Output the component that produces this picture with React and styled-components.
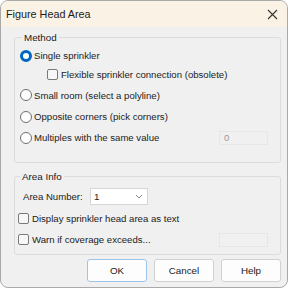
import React from 'react';
import styled, { createGlobalStyle } from 'styled-components';

const GlobalStyle = createGlobalStyle`
  html, body {
    margin: 0;
    padding: 0;
    background: #ffffff;
  }
  body {
    font-family: "Liberation Sans", Arial, sans-serif;
    color: #1b1b1b;
  }
`;

const StyledWindow = styled.div`
  box-sizing: border-box;
  width: 288px;
  height: 288px;
  border: 1px solid #a9a9a9;
  border-radius: 8px;
  overflow: hidden;
  background: #f0f0f0;
  display: flex;
  flex-direction: column;
`;

const StyledTitleBar = styled.div`
  height: 26px;
  flex: none;
  background: #faf2e5;
  display: flex;
  align-items: center;
  justify-content: space-between;
  padding: 0 9px 0 5px;
`;

const StyledTitle = styled.span`
  font-size: 10.8px;
`;

const StyledBody = styled.div`
  flex: 1;
  display: flex;
  flex-direction: column;
  padding: 5px 6px 0 13px;
`;

const StyledGroup = styled.fieldset`
  margin: 0;
  margin-top: ${(p) => p.top || 0}px;
  padding: ${(p) => p.padding};
  border: 1px solid #dcdcdc;
  border-radius: 3px;
  height: ${(p) => p.height}px;
  box-sizing: border-box;
  display: flex;
  flex-direction: column;
`;

const StyledLegend = styled.legend`
  font-size: 9.8px;
  padding: 0 2px;
  margin-left: 2px;
`;

const StyledOption = styled.label`
  display: flex;
  align-items: center;
  height: ${(p) => p.height || 21}px;
  flex: none;
  font-size: 9.6px;
  padding-left: ${(p) => p.indent || 0}px;
`;

const StyledRadio = styled.span`
  box-sizing: border-box;
  width: 12px;
  height: 12px;
  border-radius: 50%;
  flex: none;
  margin-right: 2px;
  border: ${(p) => (p.checked ? '3.5px solid #0067c0' : '1px solid #6e6e6e')};
  background: #ffffff;
`;

const StyledCheck = styled.span`
  box-sizing: border-box;
  width: 11px;
  height: 11px;
  border-radius: 2px;
  flex: none;
  margin-right: 3px;
  border: 1px solid #7a7a7a;
  background: #f7f7f7;
`;

const StyledSpacer = styled.span`
  flex: 1;
`;

const StyledField = styled.span`
  box-sizing: border-box;
  width: 49px;
  height: 14px;
  border: 1px solid #e6e6e6;
  color: #9a9a9a;
  font-size: 9.6px;
  padding-left: 4px;
  line-height: 12px;
`;

const StyledFieldRow = styled.div`
  display: flex;
  align-items: center;
  height: 24px;
  flex: none;
  font-size: 9.6px;
  padding-left: 5px;
`;

const StyledFieldLabel = styled.span`
  width: 67px;
`;

const StyledSelect = styled.div`
  box-sizing: border-box;
  width: 58px;
  height: 17px;
  background: #ffffff;
  border: 1px solid #d6d6d6;
  display: flex;
  align-items: center;
  justify-content: space-between;
  padding: 0 4px 0 3px;
  font-size: 9.8px;
`;

const StyledButtons = styled.div`
  display: flex;
  justify-content: flex-end;
  gap: 7px;
  padding: 4px 0 0;
`;

const StyledButton = styled.button`
  box-sizing: border-box;
  width: 60px;
  height: 23px;
  background: #fdfdfd;
  border: 1px solid ${(p) => (p.primary ? '#9cc3ea' : '#d0d0d0')};
  border-radius: 3px;
  font-family: inherit;
  font-size: 9.8px;
  color: #1b1b1b;
  padding: 0;
`;

const Chevron = () => (
  <svg width="8" height="5" viewBox="0 0 8 5">
    <path d="M1 1 L4 4 L7 1" fill="none" stroke="#8a8a8a" strokeWidth="1" />
  </svg>
);

const CloseIcon = () => (
  <svg width="11" height="11" viewBox="0 0 11 11">
    <path d="M1 1 L10 10 M10 1 L1 10" stroke="#333333" strokeWidth="1.1" />
  </svg>
);

const methods = [
  { label: 'Small room (select a polyline)', height: 22 },
  { label: 'Opposite corners (pick corners)' },
  { label: 'Multiples with the same value', value: '0' },
];

const App = () => (
  <>
    <GlobalStyle />
    <StyledWindow>
      <StyledTitleBar>
        <StyledTitle>Figure Head Area</StyledTitle>
        <CloseIcon />
      </StyledTitleBar>
      <StyledBody>
        <StyledGroup height={131} padding="3px 12px 0 5px">
          <StyledLegend>Method</StyledLegend>
          <StyledOption height={19}>
            <StyledRadio checked />
            Single sprinkler
          </StyledOption>
          <StyledOption height={19} indent={27}>
            <StyledCheck />
            Flexible sprinkler connection (obsolete)
          </StyledOption>
          {methods.map((m) => (
            <StyledOption key={m.label} height={m.height}>
              <StyledRadio />
              {m.label}
              {m.value && (
                <>
                  <StyledSpacer />
                  <StyledField>{m.value}</StyledField>
                </>
              )}
            </StyledOption>
          ))}
        </StyledGroup>
        <StyledGroup top={8} height={84} padding="2px 12px 0 3px">
          <StyledLegend>Area Info</StyledLegend>
          <StyledFieldRow>
            <StyledFieldLabel>Area Number:</StyledFieldLabel>
            <StyledSelect>
              1
              <Chevron />
            </StyledSelect>
          </StyledFieldRow>
          <StyledOption height={20}>
            <StyledCheck />
            Display sprinkler head area as text
          </StyledOption>
          <StyledOption height={23}>
            <StyledCheck />
            Warn if coverage exceeds...
            <StyledSpacer />
            <StyledField />
          </StyledOption>
        </StyledGroup>
        <StyledButtons>
          <StyledButton primary>OK</StyledButton>
          <StyledButton>Cancel</StyledButton>
          <StyledButton>Help</StyledButton>
        </StyledButtons>
      </StyledBody>
    </StyledWindow>
  </>
);

export default App;
